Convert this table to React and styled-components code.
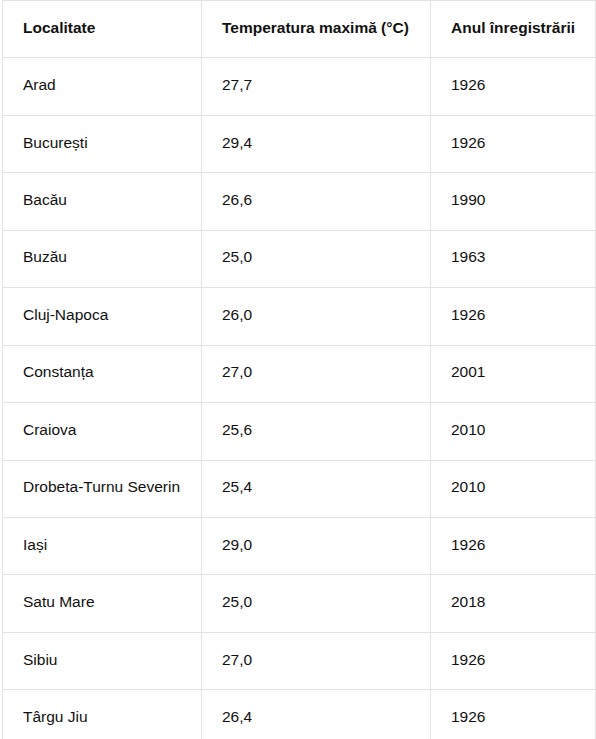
import React from 'react'
import styled, { createGlobalStyle } from 'styled-components'

const Global = createGlobalStyle`
    body {
        margin: 0;
        background: #fff;
        font-family: "Liberation Sans", Arial, sans-serif;
    }
`;

const Table = styled.table`
    margin-left: 2px;
    width: 593px;
    table-layout: fixed;
    border-collapse: collapse;
    font-size: 15.5px;
    color: #111;
`;

const Col = styled.col`
    width: ${props => props.w}px;
`;

const Cell = styled.td`
    border: 1px solid #e2e2e2;
    padding: 0 10px 3px 20px;
    height: 53.45px;
    font-weight: ${props => (props.head ? 700 : 400)};
    text-align: left;
    vertical-align: middle;
    white-space: nowrap;
    overflow: visible;
`;

const rows = [
    ['Arad', '27,7', '1926'],
    ['București', '29,4', '1926'],
    ['Bacău', '26,6', '1990'],
    ['Buzău', '25,0', '1963'],
    ['Cluj-Napoca', '26,0', '1926'],
    ['Constanța', '27,0', '2001'],
    ['Craiova', '25,6', '2010'],
    ['Drobeta-Turnu Severin', '25,4', '2010'],
    ['Iași', '29,0', '1926'],
    ['Satu Mare', '25,0', '2018'],
    ['Sibiu', '27,0', '1926'],
    ['Târgu Jiu', '26,4', '1926'],
]

function App() {
    return (
        <>
            <Global />
            <Table>
                <colgroup>
                    <Col w={199} />
                    <Col w={229} />
                    <Col w={165} />
                </colgroup>
                <thead>
                    <tr>
                        <Cell as="th" head>Localitate</Cell>
                        <Cell as="th" head>Temperatura maximă (°C)</Cell>
                        <Cell as="th" head>Anul înregistrării</Cell>
                    </tr>
                </thead>
                <tbody>
                    {rows.map(r => (
                        <tr key={r[0]}>
                            {r.map((v, i) => <Cell key={i}>{v}</Cell>)}
                        </tr>
                    ))}
                </tbody>
            </Table>
        </>
    )
}

export default App
